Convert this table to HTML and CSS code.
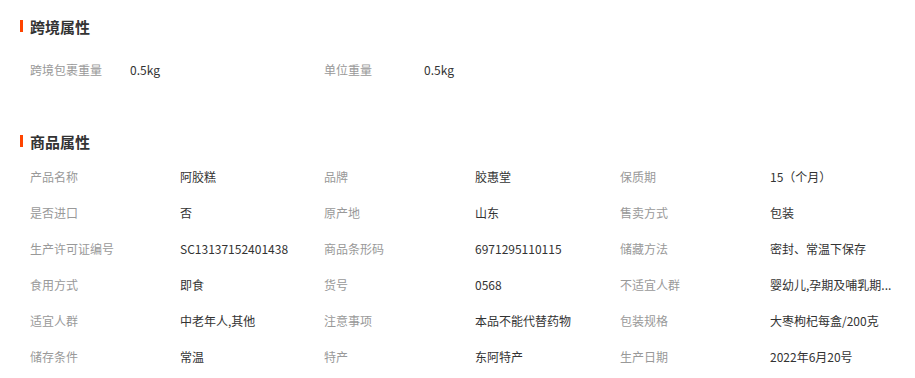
FILE: index.html
```html
<!DOCTYPE html>
<html lang="zh-CN">
<head>
<meta charset="utf-8">
<title>商品属性</title>
<link rel="stylesheet" href="styles.css">
</head>
<body>
<section class="section section-cross">
  <h2 class="title"><span class="bar"></span>跨境属性</h2>
  <div class="grid grid-cross">
    <span class="label">跨境包裹重量</span><span class="value">0.5kg</span>
    <span class="label">单位重量</span><span class="value">0.5kg</span>
  </div>
</section>
<section class="section section-goods">
  <h2 class="title"><span class="bar"></span>商品属性</h2>
  <div class="grid grid-goods">
    <span class="label">产品名称</span><span class="value">阿胶糕</span>
    <span class="label">品牌</span><span class="value">胶惠堂</span>
    <span class="label">保质期</span><span class="value">15（个月）</span>

    <span class="label">是否进口</span><span class="value">否</span>
    <span class="label">原产地</span><span class="value">山东</span>
    <span class="label">售卖方式</span><span class="value">包装</span>

    <span class="label">生产许可证编号</span><span class="value">SC13137152401438</span>
    <span class="label">商品条形码</span><span class="value">6971295110115</span>
    <span class="label">储藏方法</span><span class="value">密封、常温下保存</span>

    <span class="label">食用方式</span><span class="value">即食</span>
    <span class="label">货号</span><span class="value">0568</span>
    <span class="label">不适宜人群</span><span class="value">婴幼儿,孕期及哺乳期...</span>

    <span class="label">适宜人群</span><span class="value">中老年人,其他</span>
    <span class="label">注意事项</span><span class="value">本品不能代替药物</span>
    <span class="label">包装规格</span><span class="value">大枣枸杞每盒/200克</span>

    <span class="label">储存条件</span><span class="value">常温</span>
    <span class="label">特产</span><span class="value">东阿特产</span>
    <span class="label">生产日期</span><span class="value">2022年6月20号</span>
  </div>
</section>
</body>
</html>
```

FILE: styles.css
```css
html, body {
  margin: 0;
  padding: 0;
  background: #fff;
}
body {
  width: 915px;
  font-family: "Microsoft YaHei", "Noto Sans CJK SC", sans-serif;
  font-size: 12px;
  color: #333;
}
.section-cross {
  padding-top: 14px;
}
.section-goods {
  padding-top: 42px;
}
.title {
  margin: 0;
  padding-left: 20px;
  height: 24px;
  display: flex;
  align-items: center;
  font-size: 15px;
  font-weight: bold;
  color: #333;
}
.bar {
  width: 3px;
  height: 12px;
  background: #ff4400;
  margin-right: 7px;
}
.grid {
  display: grid;
  padding-left: 30px;
  grid-auto-rows: 36px;
  align-items: center;
}
.grid-cross {
  margin-top: 13px;
  grid-template-columns: 100px 194px 100px 1fr;
}
.grid-goods {
  margin-top: 5px;
  grid-template-columns: 150px 144px 151px 145px 150px 145px;
}
.label {
  color: #999;
  white-space: nowrap;
}
.value {
  color: #333;
  white-space: nowrap;
}
```
